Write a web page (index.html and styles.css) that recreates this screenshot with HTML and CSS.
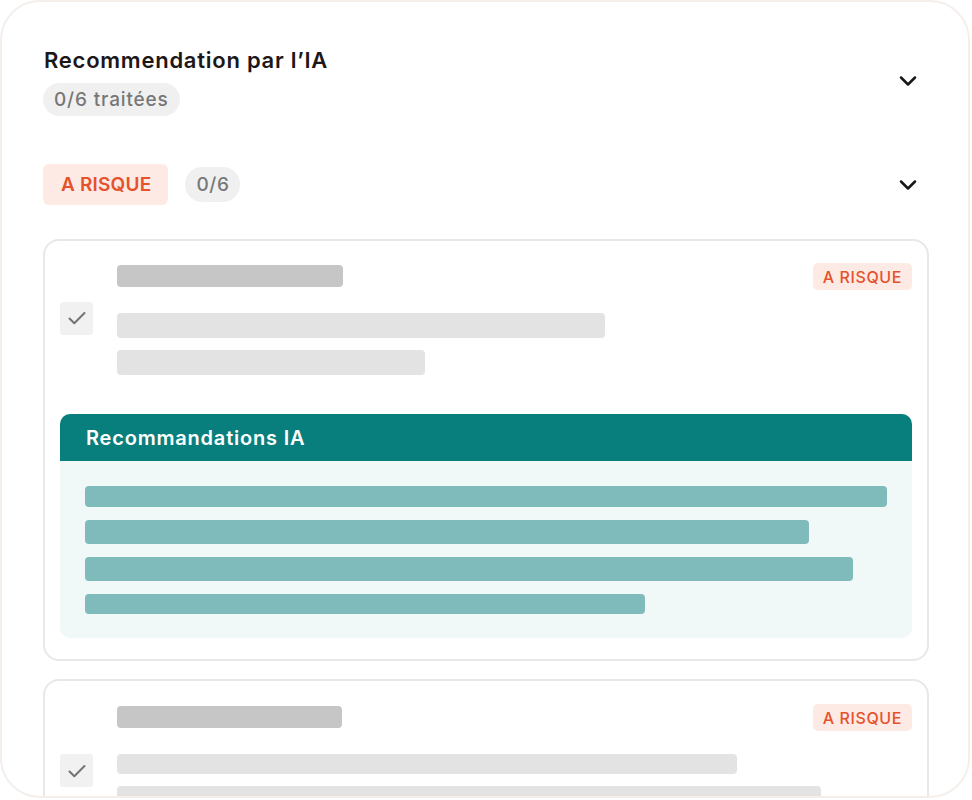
FILE: index.html
```html
<!DOCTYPE html>
<html lang="fr">
<head>
<meta charset="utf-8">
<title>Recommandation par l'IA</title>
<link rel="stylesheet" href="styles.css">
</head>
<body>
<div class="panel">
  <div class="head-row">
    <div class="head-left">
      <h1 class="title">Recommendation par l’IA</h1>
      <span class="pill">0/6 traitées</span>
    </div>
    <svg class="chev" viewBox="0 0 24 24" width="24" height="24"><path d="M5 8.5l7 7 7-7" fill="none" stroke="#1b1616" stroke-width="2.5" stroke-linecap="round" stroke-linejoin="round"/></svg>
  </div>

  <div class="section-row">
    <div class="section-left">
      <span class="risk-badge">A RISQUE</span>
      <span class="pill pill-count">0/6</span>
    </div>
    <svg class="chev" viewBox="0 0 24 24" width="24" height="24"><path d="M5 8.5l7 7 7-7" fill="none" stroke="#1b1616" stroke-width="2.5" stroke-linecap="round" stroke-linejoin="round"/></svg>
  </div>

  <div class="card">
    <div class="card-top">
      <span class="check"><svg viewBox="0 0 24 24" width="24" height="24"><path d="M4.5 12.5l4.8 4.8 10.2-10.3" fill="none" stroke="#737373" stroke-width="2" stroke-linecap="round" stroke-linejoin="round"/></svg></span>
      <div class="lines">
        <div class="bar bar-dark" style="width:226px"></div>
        <div class="bar bar-light bar-gap-lg" style="width:488px"></div>
        <div class="bar bar-light" style="width:308px"></div>
      </div>
      <span class="risk-small">A RISQUE</span>
    </div>
    <div class="reco">
      <div class="reco-head">Recommandations IA</div>
      <div class="reco-body">
        <div class="tbar" style="width:802px;height:21px"></div>
        <div class="tbar" style="width:724px;height:24px"></div>
        <div class="tbar" style="width:768px;height:24px"></div>
        <div class="tbar" style="width:560px;height:20px"></div>
      </div>
    </div>
  </div>

  <div class="card card-second">
    <div class="card-top">
      <span class="check"><svg viewBox="0 0 24 24" width="24" height="24"><path d="M4.5 12.5l4.8 4.8 10.2-10.3" fill="none" stroke="#737373" stroke-width="2" stroke-linecap="round" stroke-linejoin="round"/></svg></span>
      <div class="lines">
        <div class="bar bar-dark" style="width:225px"></div>
        <div class="bar bar-light bar-gap-lg" style="width:620px;height:20px"></div>
        <div class="bar bar-light" style="width:704px"></div>
        <div class="bar bar-light" style="width:500px;height:16px"></div>
      </div>
      <span class="risk-small">A RISQUE</span>
    </div>
  </div>
</div>
</body>
</html>
```

FILE: styles.css
```css
* { box-sizing: border-box; }
html, body { margin: 0; padding: 0; background: #ffffff; }
body {
  font-family: Inter, "Noto Sans", "Liberation Sans", sans-serif;
  width: 972px;
  height: 800px;
  overflow: hidden;
}
.panel {
  width: 970px;
  height: 798px;
  border: 2px solid #f5efec;
  border-radius: 40px;
  padding: 44px 39px 0 41px;
  overflow: hidden;
  background: #fff;
}
.head-row, .section-row {
  display: flex;
  align-items: center;
  justify-content: space-between;
  padding-right: 9px;
}
.head-left {
  display: flex;
  flex-direction: column;
  align-items: flex-start;
}
.title {
  margin: 0;
  margin-left: 1px;
  font-size: 22px;
  line-height: 28px;
  font-weight: 600;
  color: #1d1717;
  letter-spacing: 0.75px;
}
.pill {
  display: inline-flex;
  align-items: center;
  height: 33px;
  padding: 0 11px;
  border-radius: 17px;
  background: #f0f0f0;
  color: #777777;
  font-size: 19px;
  font-weight: 500;
  letter-spacing: 0.85px;
  margin-top: 9px;
}
.chev { display: block; }
.section-row { margin-top: 48px; }
.section-left {
  display: flex;
  align-items: center;
  gap: 17px;
}
.risk-badge {
  display: inline-flex;
  align-items: center;
  height: 41px;
  padding: 0 17px 0 18px;
  border-radius: 6px;
  background: #feeae5;
  color: #e5522b;
  font-size: 19px;
  font-weight: 600;
  letter-spacing: 0.2px;
}
.pill-count {
  margin-top: 0;
  height: 35px;
  padding: 0 11px;
  letter-spacing: 0.6px;
}
.card {
  margin-top: 34px;
  border: 2px solid #e8e8e8;
  border-radius: 16px;
  padding: 24px 15px 21px 15px;
}
.card-second {
  margin-top: 18px;
  padding-top: 25px;
}
.card-top {
  display: flex;
  align-items: center;
}
.check {
  width: 33px;
  height: 33px;
  border-radius: 3px;
  background: #f1f1f1;
  display: flex;
  align-items: center;
  justify-content: center;
  flex: none;
  margin-bottom: 4px;
}
.lines {
  flex: 1;
  min-width: 0;
  margin-left: 24px;
  display: flex;
  flex-direction: column;
  gap: 12px;
}
.bar {
  height: 25px;
  border-radius: 4px;
  flex: none;
}
.bar-dark { background: #c6c6c6; height: 22px; }
.bar-light { background: #e3e3e3; }
.bar-gap-lg { margin-top: 14px; }
.risk-small {
  align-self: flex-start;
  margin-top: -2px;
  display: inline-flex;
  align-items: center;
  height: 27px;
  padding: 0 10px;
  border-radius: 5px;
  background: #feeae5;
  color: #e5522b;
  font-size: 16px;
  font-weight: 500;
  letter-spacing: 0.6px;
  flex: none;
}
.reco {
  margin-top: 39px;
  border-radius: 10px;
  overflow: hidden;
  background: #f0f8f8;
}
.reco-head {
  height: 47px;
  background: #097f7d;
  color: #ffffff;
  font-size: 20px;
  font-weight: 600;
  letter-spacing: 0.8px;
  display: flex;
  align-items: center;
  padding-left: 26px;
}
.reco-body {
  padding: 25px 25px 24px 25px;
  display: flex;
  flex-direction: column;
  gap: 13px;
}
.tbar {
  background: #7fbbbb;
  border-radius: 4px;
}
```
